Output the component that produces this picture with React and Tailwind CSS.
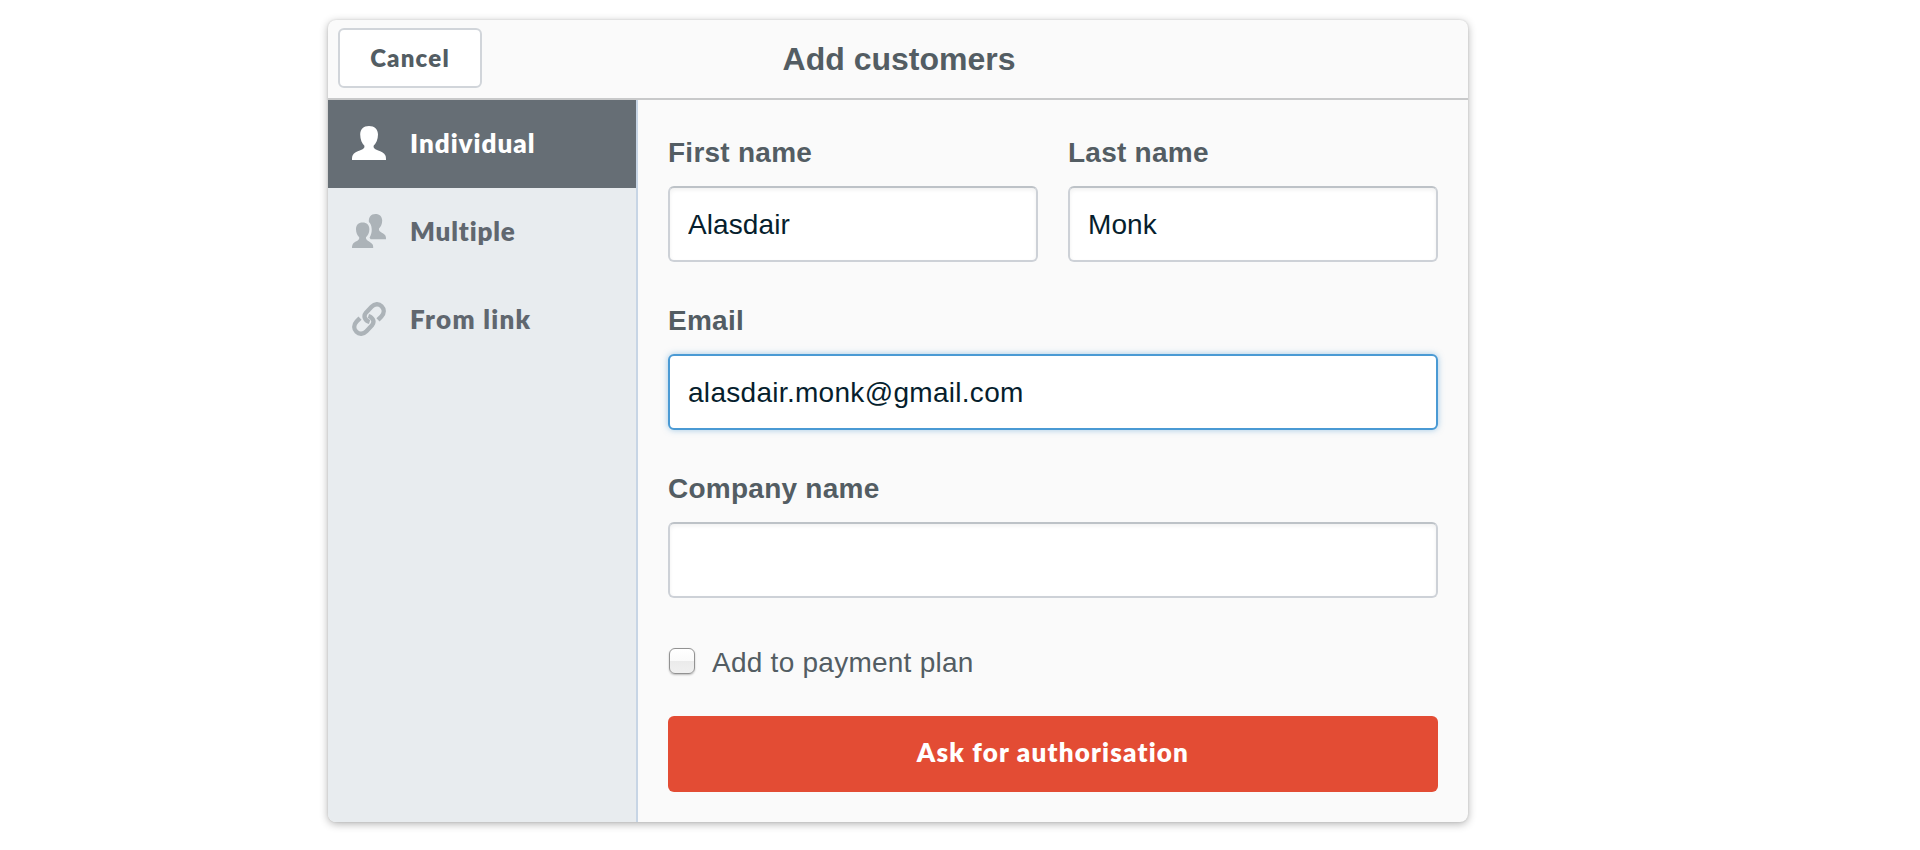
import { useState } from "react";

function PersonIcon() {
  return (
    <svg viewBox="0 0 34 34" className="h-[34px] w-[34px]" fill="currentColor">
      <path d="M17 0C22.5 0 26 3.2 26 8.6C26 13.6 24 17.6 21.6 19.8V21.2C22.4 24.4 31 24.6 33.4 29.4C34 30.8 34 32.4 34 34H0C0 32.4 0 30.8 .6 29.4C3 24.6 11.6 24.4 12.4 21.2V19.8C10 17.6 8.2 13.6 8.2 8.6C8.2 3.2 11.5 0 17 0Z" />
    </svg>
  );
}

function PeopleIcon() {
  return (
    <svg viewBox="0 0 34 34" className="h-[34px] w-[34px]" fill="currentColor">
      <path d="M10.6 8.6C14.8 8.6 17.4 11.2 17.4 15.2C17.4 18.8 15.8 21.6 14 23.2V24.6C14.6 27 18.6 27.6 20.6 30.6C21.2 31.6 21.2 32.8 21.2 34H0C0 32.8 0 31.6 .6 30.4C2.4 27.6 6.8 27 7.2 24.6V23.2C5.4 21.6 4 18.8 4 15.2C4 11.2 6.4 8.6 10.6 8.6Z" />
      <path d="M23.4 0C27.6 0 30.2 2.6 30.2 6.6C30.2 10.2 28.8 13 27 14.6V16C27.6 18.4 31.8 18.8 33.5 21.8C34 22.8 34 24 34 25.2H18.7C18 24.6 17.6 24.2 17.6 23.6C19.2 20.8 19.9 18 19.7 15C19.4 11.6 18.6 9.4 16.9 8.1C16.4 3.4 18.9 0 23.4 0Z" />
    </svg>
  );
}

function LinkIcon() {
  return (
    <svg viewBox="0 0 34 34" className="h-[34px] w-[34px]" fill="none" stroke="currentColor" strokeWidth="4.4">
      <path d="M17.6 20C13 18.6 11 14.2 14 10.6L19.6 4.8C22.6 1.6 26.9 1.5 29.6 4.2C32.5 7.1 32.4 11.2 29.4 14.4L26 17.9" />
      <path d="M16.4 14C21 15.4 23 19.8 20 23.4L14.4 29.2C11.4 32.4 7.1 32.5 4.4 29.8C1.5 26.9 1.6 22.8 4.6 19.6L8 16.1" />
    </svg>
  );
}

const TABS = [
  { label: "Individual", Icon: PersonIcon, tracking: "tracking-[1px]" },
  { label: "Multiple", Icon: PeopleIcon, tracking: "tracking-[0.85px]" },
  { label: "From link", Icon: LinkIcon, tracking: "tracking-[1.3px]" },
];

function Field({ label, value, focused }) {
  return (
    <label className="block min-w-0 flex-1">
      <span className="block pt-px pb-[11px] text-[28px] leading-[44px] font-bold tracking-[0.25px] text-[#535d63]">
        {label}
      </span>
      <input
        defaultValue={value}
        className={
          "block h-[76px] w-full rounded-[6px] border-2 bg-white px-[18px] pt-[2px] text-[28px] text-[#061e2d] outline-none " +
          (focused
            ? "border-[#4a9ad4] tracking-[0.3px] shadow-[0_0_6px_rgba(74,154,212,0.5)]"
            : "border-[#cdd1d7] border-t-[#bdc2c7] tracking-[0.1px] shadow-[inset_0_2px_4px_rgba(0,0,0,0.06)]")
        }
      />
    </label>
  );
}

export default function App() {
  const [active, setActive] = useState("Individual");
  return (
    <div className="h-[850px] overflow-hidden bg-white pt-5 pl-[328px] font-['Liberation_Sans',Arial,sans-serif]">
      <div className="flex h-[802px] w-[1140px] flex-col overflow-hidden rounded-[8px] bg-[#fafafa] shadow-[0_2px_8px_rgba(0,0,0,0.3),0_0_2px_rgba(0,0,0,0.12)]">
        <header className="grid h-20 shrink-0 grid-cols-[1fr_auto_1fr] items-center border-b-2 border-[#c8c9ca] px-[10px]">
          <button className="mb-[2px] h-[60px] w-36 rounded-[6px] border-2 border-[#d1d5da] bg-white pb-px font-['Lato',sans-serif] text-[24px] font-extrabold tracking-[1.2px] text-[#535d63]">
            Cancel
          </button>
          <h1 className="pl-[2px] text-[32px] leading-[40px] font-bold text-[#535d63]">Add customers</h1>
        </header>
        <div className="flex flex-1">
          <nav className="w-[310px] shrink-0 border-r-2 border-[#c7d5e5] bg-[#e8ecef]">
            {TABS.map(({ label, Icon, tracking }) => (
              <button
                key={label}
                onClick={() => setActive(label)}
                className={
                  "flex h-[88px] w-full items-center pb-[2px] pl-6 " +
                  (active === label ? "bg-[#666e75] text-white" : "text-[#acb3b8]")
                }
              >
                <Icon />
                <span
                  className={
                    "ml-6 pb-px font-['Lato',sans-serif] text-[26px] leading-[40px] font-extrabold " +
                    tracking +
                    (active === label ? " text-white" : " text-[#60676f]")
                  }
                >
                  {label}
                </span>
              </button>
            ))}
          </nav>
          <main className="flex-1 p-[30px]">
            <div className="flex gap-[30px]">
              <Field label="First name" value="Alasdair" />
              <Field label="Last name" value="Monk" />
            </div>
            <div className="mt-9 flex">
              <Field label="Email" value="alasdair.monk@gmail.com" focused />
            </div>
            <div className="mt-9 flex">
              <Field label="Company name" value="" />
            </div>
            <label className="mt-[42px] flex h-11 items-center text-[28px] leading-[44px] tracking-[0.25px] text-[#535d63]">
              <input
                type="checkbox"
                className="mr-[17px] mb-[2px] ml-px h-[26px] w-[26px] appearance-none rounded-[6px] border border-[#929292] bg-[linear-gradient(#fff_0%,#fafafa_48%,#ebebeb_50%,#f0f0f0_100%)] shadow-[0_1px_2px_rgba(0,0,0,0.25)]"
              />
              <span className="pt-[2px]">Add to payment plan</span>
            </label>
            <button className="mt-8 h-[76px] w-full rounded-[6px] bg-[#e34c34] pb-[3px] font-['Lato',sans-serif] text-[26px] font-extrabold tracking-[1.2px] text-white">
              Ask for authorisation
            </button>
          </main>
        </div>
      </div>
    </div>
  );
}
